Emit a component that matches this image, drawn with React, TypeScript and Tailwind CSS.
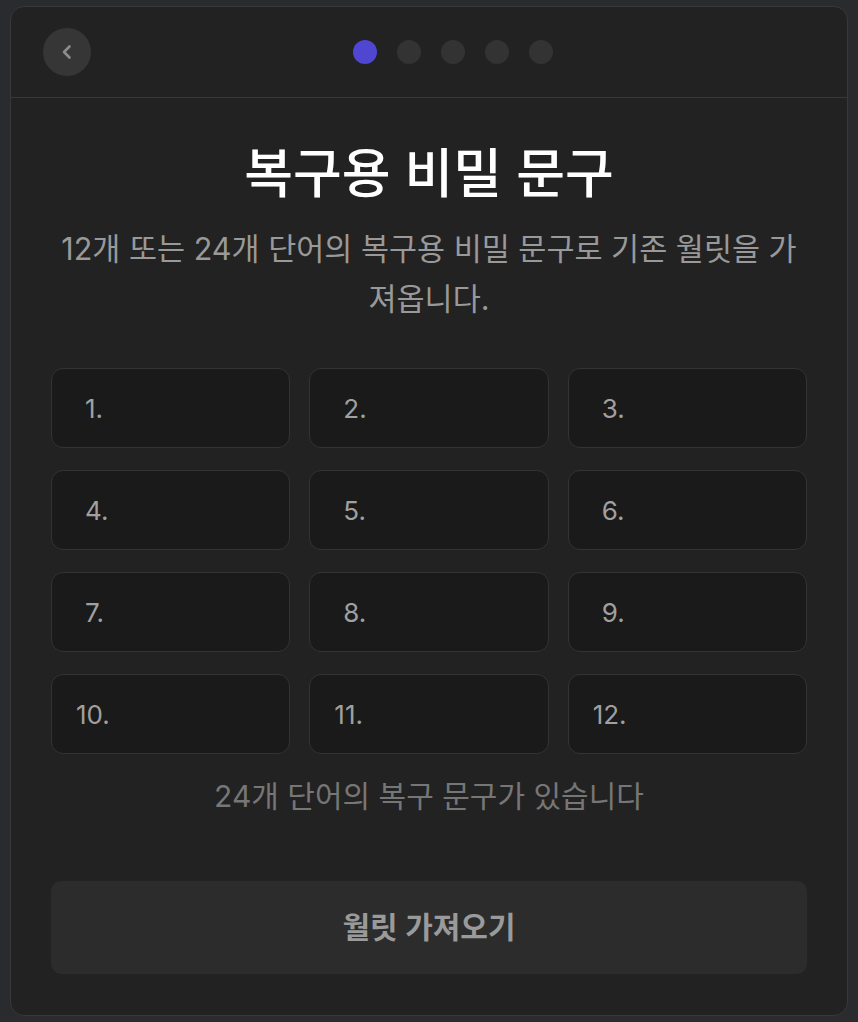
import React from 'react';

const words = Array.from({ length: 12 }, (_, i) => i + 1);

function Dot({ active }: { active?: boolean }) {
	return (
		<span
			className={`h-6 w-6 rounded-full ${active ? 'bg-[#4f46d1]' : 'bg-[#333333]'}`}
		/>
	);
}

export default function App() {
	return (
		<div
			className="min-h-screen bg-[#2a2b2e] px-[10px] pt-[6px] pb-[6px]"
			style={{ fontFamily: 'Inter, "Noto Sans CJK KR", sans-serif' }}
		>
			<div className="flex h-[1010px] flex-col rounded-[14px] border border-[#383838] bg-[#222222]">
				{/* header */}
				<div className="flex h-[91px] items-center border-[#383838] border-b px-[32px]">
					<button className="-mt-[1px] flex h-12 w-12 shrink-0 items-center justify-center rounded-full bg-[#363636]">
						<svg width="12" height="18" viewBox="0 0 12 18" fill="none">
							<path
								d="M8.5 3.5L3 9L8.5 14.5"
								stroke="#8c8c8c"
								strokeWidth="2.6"
								strokeLinecap="round"
								strokeLinejoin="round"
							/>
						</svg>
					</button>
					<div className="-mt-[1px] flex flex-1 items-center justify-center gap-5">
						<Dot active />
						<Dot />
						<Dot />
						<Dot />
						<Dot />
					</div>
				</div>

				{/* body */}
				<div className="flex flex-1 flex-col px-[40px]">
					<h1 className="mt-[44px] text-center font-medium text-[53px] text-white leading-[64px]">
						복구용 비밀 문구
					</h1>
					<p className="mt-[18px] text-center text-[#999999] text-[30.5px] leading-[50px]">
						12개 또는 24개 단어의 복구용 비밀 문구로 기존 월릿을 가져옵니다.
					</p>

					<div className="mt-[44px] grid grid-cols-3 gap-x-[19px] gap-y-[22px]">
						{words.map((n) => (
							<div
								key={n}
								className="flex h-[80px] items-center rounded-[12px] border border-[#333333] bg-[#1a1a1a] pl-[33px]"
							>
								<span
									className={`text-[#a0a0a0] text-[26px] ${n >= 10 ? '-ml-[9px]' : ''}`}
								>
									{n}.
								</span>
							</div>
						))}
					</div>

					<p className="mt-[21px] text-center text-[#767676] text-[30px] leading-[42px]">
						24개 단어의 복구 문구가 있습니다
					</p>

					<button className="mt-[64px] flex h-[93px] w-full items-center justify-center rounded-[10px] bg-[#2c2c2c] font-semibold text-[#9a9a9a] text-[30px]">
						월릿 가져오기
					</button>
				</div>
			</div>
		</div>
	);
}
